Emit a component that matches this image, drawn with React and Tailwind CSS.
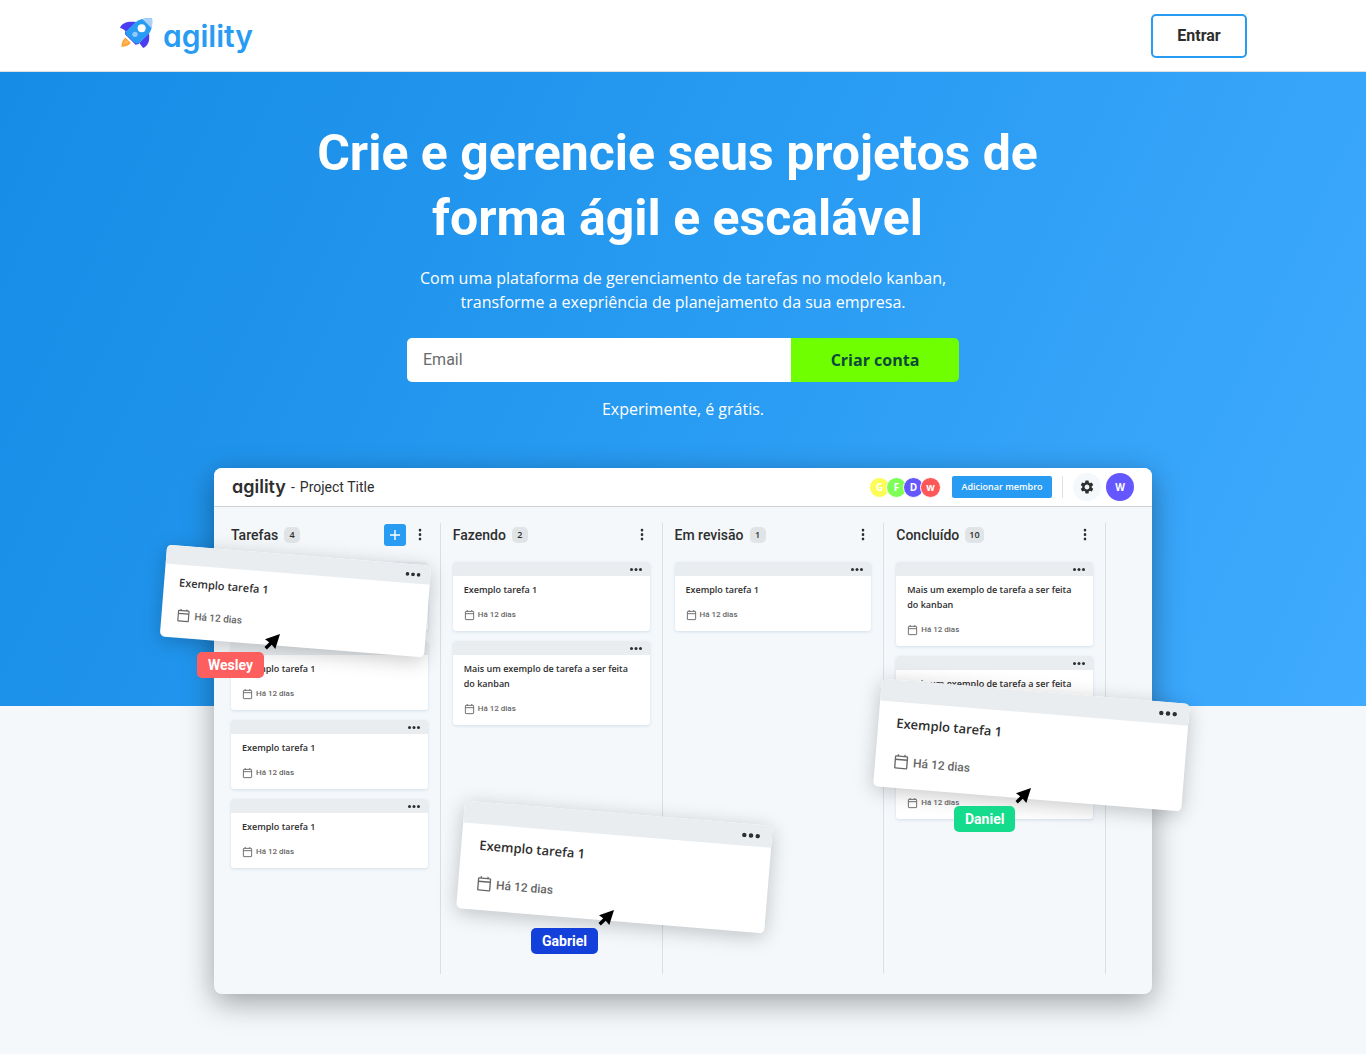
import React from "react";
import { MdSettings } from "react-icons/md";

function Rocket() {
  return (
    <svg viewBox="56 50 102 96" className="mb-[5px] h-8 w-[34px]" aria-hidden="true">
      <path d="M59 82 C66 67 82 62 108 65 L78 94 C72 88 66 84 59 82Z" fill="#4a3df2" />
      <path d="M129 143 C144 136 149 122 146 98 L117 127 C121 133 124 138 129 143Z" fill="#4a3df2" />
      <path d="M74 92 L74 102 L106 133 L118 130Z" fill="#4a3df2" />
      <path d="M76 112 C66 118 64 128 63 139 C75 139 86 136 91 127Z" fill="#fda63a" />
      <path d="M78 119 C73 123 71 126 70 132 C76 131 81 129 84 125Z" fill="#ffb95c" />
      <path d="M76 94 L104 67 C117 55 134 53 155 54 C157 72 155 91 143 103 L116 129 C112 131 105 129 99 124 L79 105 C75 101 74 97 76 94Z" fill="#289bf2" />
      <path d="M126 56 C137 53 147 53 155 54 C156 63 156 73 154 84Z" fill="#a9d3fb" />
      <circle cx="124" cy="84" r="12" fill="#fff" />
      <circle cx="104" cy="102" r="8" fill="#93c8fa" />
    </svg>
  );
}

function CalendarIcon({ className }) {
  return (
    <svg viewBox="0 0 24 24" className={className} fill="none" stroke="currentColor" strokeWidth="2" aria-hidden="true">
      <rect x="3" y="3" width="18" height="18" rx="1" />
      <path d="M3 8h18M7 0v3M17 0v3" />
    </svg>
  );
}

function Cursor() {
  return (
    <svg viewBox="0 0 16 16" className="absolute -top-[18px] left-full size-4" aria-hidden="true">
      <path d="M16 0 L1 5.2 L5.2 8.3 L0.5 13 L2.8 15.6 L7.8 10.8 L11.3 15Z" fill="#000" />
    </svg>
  );
}

function Dots({ className }) {
  return (
    <svg viewBox="0 0 24 6" className={className} fill="currentColor" aria-hidden="true">
      <circle cx="3" cy="3" r="3" />
      <circle cx="12" cy="3" r="3" />
      <circle cx="21" cy="3" r="3" />
    </svg>
  );
}

function Card({ title }) {
  return (
    <article className="overflow-hidden rounded-[3px] bg-white shadow-[0_1px_3px_rgba(60,110,160,0.18)]">
      <div className="flex h-[14px] items-center justify-end bg-[#e9edf0] pr-2">
        <button type="button" aria-label="Opções da tarefa" className="flex text-[#2e2e2e]">
          <Dots className="h-[3px] w-3" />
        </button>
      </div>
      <div className="px-[11px] pt-[6px] pb-[11px]">
        <h3 className="font-['Open_Sans',sans-serif] text-[9px] leading-[15px] font-semibold text-[#2e2e2e]">{title}</h3>
        <p className="mt-[13px] flex h-[10px] items-center gap-[3px] font-[Roboto,sans-serif] text-[8px] leading-[10px] font-medium text-[#666]">
          <CalendarIcon className="size-[11px]" />
          Há 12 dias
        </p>
      </div>
    </article>
  );
}

const columns = [
  { name: "Tarefas", count: 4, add: true, cards: ["Exemplo tarefa 1", "Exemplo tarefa 1", "Exemplo tarefa 1", "Exemplo tarefa 1"] },
  { name: "Fazendo", count: 2, cards: ["Exemplo tarefa 1", "Mais um exemplo de tarefa a ser feita do kanban"] },
  { name: "Em revisão", count: 1, cards: ["Exemplo tarefa 1"] },
  {
    name: "Concluído",
    count: 10,
    cards: ["Mais um exemplo de tarefa a ser feita do kanban", "Mais um exemplo de tarefa a ser feita do kanban", "Exemplo tarefa 1"],
  },
];

function Column({ name, count, add, cards }) {
  return (
    <section className="min-h-[451px] border-r border-[#dcdfe2] px-3">
      <header className="flex h-[23px] items-center">
        <h2 className="font-[Roboto,sans-serif] text-[14px] leading-[22px] font-medium text-[#2e2e2e]">{name}</h2>
        <span className="ml-[6px] flex h-4 min-w-4 items-center justify-center rounded-[5px] bg-[#e1e4e6] px-[4px] font-['Open_Sans',sans-serif] text-[9px] font-semibold text-[#2e2e2e]">
          {count}
        </span>
        <span className="ml-auto flex items-center gap-[6px]">
          {add && (
            <button type="button" aria-label="Adicionar tarefa" className="flex size-[22px] items-center justify-center rounded-[3px] bg-[#289bf2]">
              <svg viewBox="0 0 10 10" className="size-[10px]" stroke="#fff" strokeWidth="1.4" aria-hidden="true">
                <path d="M5 0v10M0 5h10" />
              </svg>
            </button>
          )}
          <button type="button" aria-label="Opções da coluna" className="flex h-[22px] w-4 items-center justify-center text-[#2e2e2e]">
            <Dots className="h-[3px] w-3 rotate-90" />
          </button>
        </span>
      </header>
      <div className="mt-4 flex flex-col gap-[10px]">
        {cards.map((title, i) => (
          <Card key={i} title={title} />
        ))}
      </div>
    </section>
  );
}

function FloatingCard({ className, large }) {
  return (
    <article
      className={`absolute overflow-hidden rounded-[5px] bg-white shadow-[0_4px_20px_rgba(0,0,0,0.22)] ${large ? "w-[309px]" : "w-[265px]"} ${className}`}
    >
      <div className={`flex items-center justify-end bg-[#e9edf0] ${large ? "h-[22px] pr-3" : "h-[19px] pr-[10px]"}`}>
        <Dots className={`text-[#2e2e2e] ${large ? "h-[5px] w-[18px]" : "h-1 w-[15px]"}`} />
      </div>
      <div className={large ? "h-[86px] px-[18px] pt-[10px]" : "h-[73px] px-[15px] pt-2"}>
        <h3
          className={`font-['Open_Sans',sans-serif] font-semibold text-[#2e2e2e] ${large ? "text-[13px] leading-[22px]" : "text-[11px] leading-[20px]"}`}
        >
          Exemplo tarefa 1
        </h3>
        <p
          className={`flex items-center font-[Roboto,sans-serif] font-medium text-[#666] ${large ? "mt-5 gap-1 text-[12px] leading-4" : "mt-4 gap-1 text-[10px] leading-[14px]"}`}
        >
          <CalendarIcon className={large ? "size-4" : "size-[14px]"} />
          Há 12 dias
        </p>
      </div>
    </article>
  );
}

function NameTag({ name, className }) {
  return (
    <div className={`absolute flex h-[26px] items-center rounded-[5px] px-[11px] font-[Roboto,sans-serif] text-[14px] font-bold text-white ${className}`}>
      {name}
      <Cursor />
    </div>
  );
}

const members = [
  { letter: "G", color: "bg-[#fcfc57]" },
  { letter: "F", color: "bg-[#7dff57]" },
  { letter: "D", color: "bg-[#6557ff]" },
  { letter: "w", color: "bg-[#fd5757]" },
];

function BoardPreview() {
  return (
    <div className="relative mx-auto -mb-[288px] w-full max-w-[938px] rounded-lg bg-[#f4f8fb] shadow-[0_8px_30px_rgba(0,0,0,0.36)]">
      <header className="flex h-[39px] items-center rounded-t-lg border-b border-[#d0d4d8] bg-white pr-[18px] pl-[18px]">
        <span className="font-[Inter,sans-serif] text-[18px] leading-6 font-semibold text-[#2e2e2e] [font-feature-settings:'cv11']">agility</span>
        <span className="ml-[5px] font-[Roboto,sans-serif] text-[14px] text-[#2e2e2e]">-</span>
        <span className="ml-[5px] font-[Roboto,sans-serif] text-[14px] text-[#2e2e2e]">Project Title</span>
        <div className="ml-auto flex">
          {members.map((m, i) => (
            <span
              key={m.letter}
              className={`flex size-[21px] items-center justify-center rounded-full border border-white font-['Open_Sans',sans-serif] text-[10px] font-bold text-white ${m.color} ${i ? "-ml-1" : ""}`}
            >
              {m.letter}
            </span>
          ))}
        </div>
        <button type="button" className="ml-[11px] h-[22px] w-[100px] rounded-[2px] bg-[#289bf2] font-['Open_Sans',sans-serif] text-[9px] font-semibold text-white">
          Adicionar membro
        </button>
        <span className="ml-[10px] h-[22px] w-px bg-[#dfe2e5]" />
        <button type="button" aria-label="Configurações" className="ml-[10px] flex size-7 items-center justify-center rounded-full bg-[#f4f8fb] text-[#2e2e2e]">
          <MdSettings className="size-4" />
        </button>
        <span className="ml-[5px] flex size-7 items-center justify-center rounded-full bg-[#6557ff] font-['Open_Sans',sans-serif] text-[10px] font-bold text-white">
          W
        </span>
      </header>
      <div className="grid grid-cols-4 pt-4 pr-[46px] pb-5 pl-[5px]">
        {columns.map((c) => (
          <Column key={c.name} {...c} />
        ))}
      </div>
      <FloatingCard className="top-[87px] -left-[51px] rotate-[4.6deg]" />
      <NameTag name="Wesley" className="top-[184px] -left-[17px] bg-[#fd5f5f]" />
      <FloatingCard large className="top-[345px] left-[246px] rotate-[4.7deg]" />
      <NameTag name="Gabriel" className="top-[460px] left-[317px] bg-[#133fdb]" />
      <FloatingCard large className="top-[223px] left-[663px] rotate-[4.7deg]" />
      <NameTag name="Daniel" className="top-[338px] left-[740px] bg-[#14dc8c]" />
    </div>
  );
}

export default function App() {
  return (
    <div className="min-h-screen bg-[#f4f8fb] pb-[348px]">
      <header className="border-b border-[#e0e0e0] bg-white">
        <div className="mx-auto flex h-[71px] max-w-[1128px] items-center justify-between">
          <a href="#" className="flex items-center gap-[10px]">
            <Rocket />
            <span className="font-[Inter,sans-serif] text-[30px] leading-10 font-semibold text-[#289bf2] [font-feature-settings:'cv11']">agility</span>
          </a>
          <a href="#" className="flex h-11 w-24 items-center justify-center rounded-[5px] border-2 border-[#289bf2] font-[Roboto,sans-serif] text-base font-bold text-[#2e2e2e]">
            Entrar
          </a>
        </div>
      </header>
      <main className="flex flex-col bg-[linear-gradient(115deg,#178ce6_0%,#289bf2_50%,#40abff_100%)] pt-[49px]">
        <div className="mx-auto max-w-[780px] text-center text-white">
          <h1 className="pr-[11px] font-[Roboto,sans-serif] text-[50px] leading-[65px] font-bold">Crie e gerencie seus projetos de forma ágil e escalável</h1>
          <p className="mx-auto mt-[15px] max-w-[552px] font-['Open_Sans',sans-serif] text-base leading-6 font-normal">
            Com uma plataforma de gerenciamento de tarefas no modelo kanban, transforme a exepriência de planejamento da sua empresa.
          </p>
          <form className="mx-auto mt-6 flex h-11 max-w-[552px] overflow-hidden rounded-[5px]" onSubmit={(e) => e.preventDefault()}>
            <input
              type="email"
              aria-label="Email"
              placeholder="Email"
              className="min-w-0 flex-1 bg-white px-4 font-[Roboto,sans-serif] text-base text-[#2e2e2e] outline-none placeholder:text-[#6b6b6b]"
            />
            <button type="submit" className="w-[168px] bg-[#70ff00] font-['Open_Sans',sans-serif] text-base font-bold text-[#0b4a3a]">
              Criar conta
            </button>
          </form>
          <p className="mt-[15px] mb-[47px] font-['Open_Sans',sans-serif] text-base leading-6">Experimente, é grátis.</p>
        </div>
        <BoardPreview />
      </main>
    </div>
  );
}
